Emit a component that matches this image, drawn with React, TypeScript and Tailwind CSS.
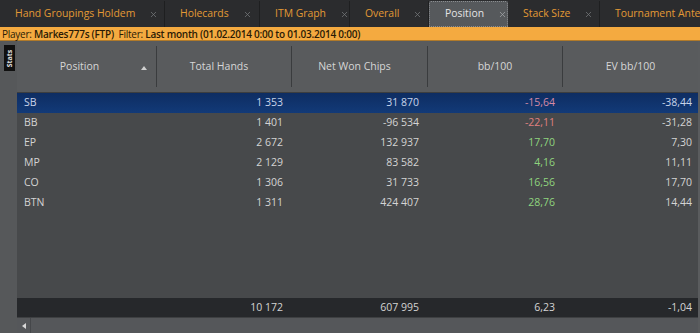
import { X } from "lucide-react";

const tabs = [
  { label: "Hand Groupings Holdem", w: "w-[165px]" },
  { label: "Holecards", w: "w-[95px]" },
  { label: "ITM Graph", w: "w-[90px]" },
  { label: "Overall", w: "w-[79px]" },
  { label: "Position", w: "w-[79px]", active: true },
  { label: "Stack Size", w: "w-[92px]" },
  { label: "Tournament Ante", w: "w-[110px]", cut: true },
];

type Row = { pos: string; hands: string; chips: string; bb: string; bbColor: string; ev: string };

const rows: Row[] = [
  { pos: "SB", hands: "1 353", chips: "31 870", bb: "-15,64", bbColor: "text-[#d58aa6]", ev: "-38,44" },
  { pos: "BB", hands: "1 401", chips: "-96 534", bb: "-22,11", bbColor: "text-[#e08080]", ev: "-31,28" },
  { pos: "EP", hands: "2 672", chips: "132 937", bb: "17,70", bbColor: "text-[#8fd47e]", ev: "7,30" },
  { pos: "MP", hands: "2 129", chips: "83 582", bb: "4,16", bbColor: "text-[#8fd47e]", ev: "11,11" },
  { pos: "CO", hands: "1 306", chips: "31 733", bb: "16,56", bbColor: "text-[#8fd47e]", ev: "17,70" },
  { pos: "BTN", hands: "1 311", chips: "424 407", bb: "28,76", bbColor: "text-[#8fd47e]", ev: "14,44" },
];

const cols = "grid grid-cols-[140px_135px_136px_135px_135px]";

export default function App() {
  return (
    <div className="w-[700px] h-[333px] overflow-hidden bg-[#4f5153] text-[10.5px] font-['Open_Sans',sans-serif] flex flex-col">
      {/* tab strip */}
      <div className="h-[27px] bg-[#2b2c2e] flex items-end shrink-0 text-[10.4px]">
        {tabs.map((t) => (
          <div
            key={t.label}
            className={`${t.w} shrink-0 h-[26px] flex items-center gap-[14px] border-r border-[#1e1f20] ${
              t.active
                ? "bg-[#56595c] text-[#e4e4e4] border border-dotted border-[#8a8d90] rounded-t-[2px] pl-[15px]"
                : "text-[#e39a35] pl-[15px]"
            } ${t.cut ? "border-r-0 whitespace-nowrap pl-[14px]" : ""}`}
          >
            <span className="whitespace-nowrap">{t.label}</span>
            {!t.cut && <X className={`w-[9px] h-[9px] ${t.active ? "text-[#a4a7aa]" : "text-[#75787b]"}`} strokeWidth={2} />}
          </div>
        ))}
      </div>

      {/* filter bar */}
      <div className="h-[14px] bg-[#f4aa40] text-[#2a1a05] flex items-center pl-[2px] leading-none whitespace-nowrap shrink-0 border-b border-[#b07a2a] text-[10px] tracking-[-0.25px]">
        <span>Player:&nbsp;</span>
        <span className="font-semibold">Markes777s (FTP)</span>
        <span>&nbsp;&nbsp;Filter:&nbsp;</span>
        <span className="font-semibold">Last month (01.02.2014 0:00 to 01.03.2014 0:00)</span>
      </div>

      <div className="flex flex-1 min-h-0">
        {/* side strip */}
        <div className="w-[17px] shrink-0 bg-[#56585a] pt-[4px] pl-[4px]">
          <div className="w-[11px] h-[26px] bg-[#101010] flex items-center justify-center">
            <span className="text-[7px] font-bold text-[#e0e0e0] -rotate-90 whitespace-nowrap leading-none">Stats</span>
          </div>
        </div>

        {/* grid */}
        <div className="flex-1 flex flex-col min-w-0 border-r-2 border-[#5a5c5e]">
          {/* header */}
          <div className={`${cols} h-[52px] bg-[#595b5d] text-[#d6d6d6] border-b border-[#3c3e40] shrink-0`}>
            <div className="relative flex items-center justify-center pr-[14px] border-r border-[#3a3c3e] my-[5px]">
              Position
              <svg className="absolute right-[9px] top-[20px]" width="6" height="4" viewBox="0 0 6 4">
                <path d="M0 4 L3 0 L6 4 Z" fill="#d0d0d0" />
              </svg>
            </div>
            <div className="flex items-center justify-center border-r border-[#3a3c3e] my-[5px] pr-[10px]">Total Hands</div>
            <div className="flex items-center justify-center border-r border-[#3a3c3e] my-[5px] pr-[10px]">Net Won Chips</div>
            <div className="flex items-center justify-center border-r border-[#3a3c3e] my-[5px]">bb/100</div>
            <div className="flex items-center justify-center my-[5px]">EV bb/100</div>
          </div>

          {/* body */}
          <div className="flex-1 bg-[#47494b] text-[#d4d4d4]">
            {rows.map((r, i) => (
              <div
                key={r.pos}
                className={`${cols} h-[20px] items-center ${
                  i === 0 ? "bg-gradient-to-b from-[#0e2d62] to-[#123a78] text-[#c8d4ea]" : ""
                }`}
              >
                <div className="pl-[7px]">{r.pos}</div>
                <div className="text-right pr-[9px]">{r.hands}</div>
                <div className="text-right pr-[9px]">{r.chips}</div>
                <div className={`text-right pr-[8px] ${r.bbColor}`}>{r.bb}</div>
                <div className="text-right pr-[6px]">{r.ev}</div>
              </div>
            ))}
          </div>

          {/* totals */}
          <div className={`${cols} h-[19px] items-center bg-[#26282b] text-[#d4d4d4] shrink-0`}>
            <div />
            <div className="text-right pr-[9px]">10 172</div>
            <div className="text-right pr-[9px]">607 995</div>
            <div className="text-right pr-[8px]">6,23</div>
            <div className="text-right pr-[6px]">-1,04</div>
          </div>

          {/* scrollbar */}
          <div className="h-[16px] bg-[#55575a] flex items-center shrink-0 border-t border-[#3e4042]">
            <div className="w-[14px] h-full flex items-center justify-center border-r border-[#45474a]">
              <svg width="4" height="6" viewBox="0 0 4 6">
                <path d="M4 0 L0 3 L4 6 Z" fill="#d8d8d8" />
              </svg>
            </div>
          </div>
        </div>
      </div>
    </div>
  );
}
